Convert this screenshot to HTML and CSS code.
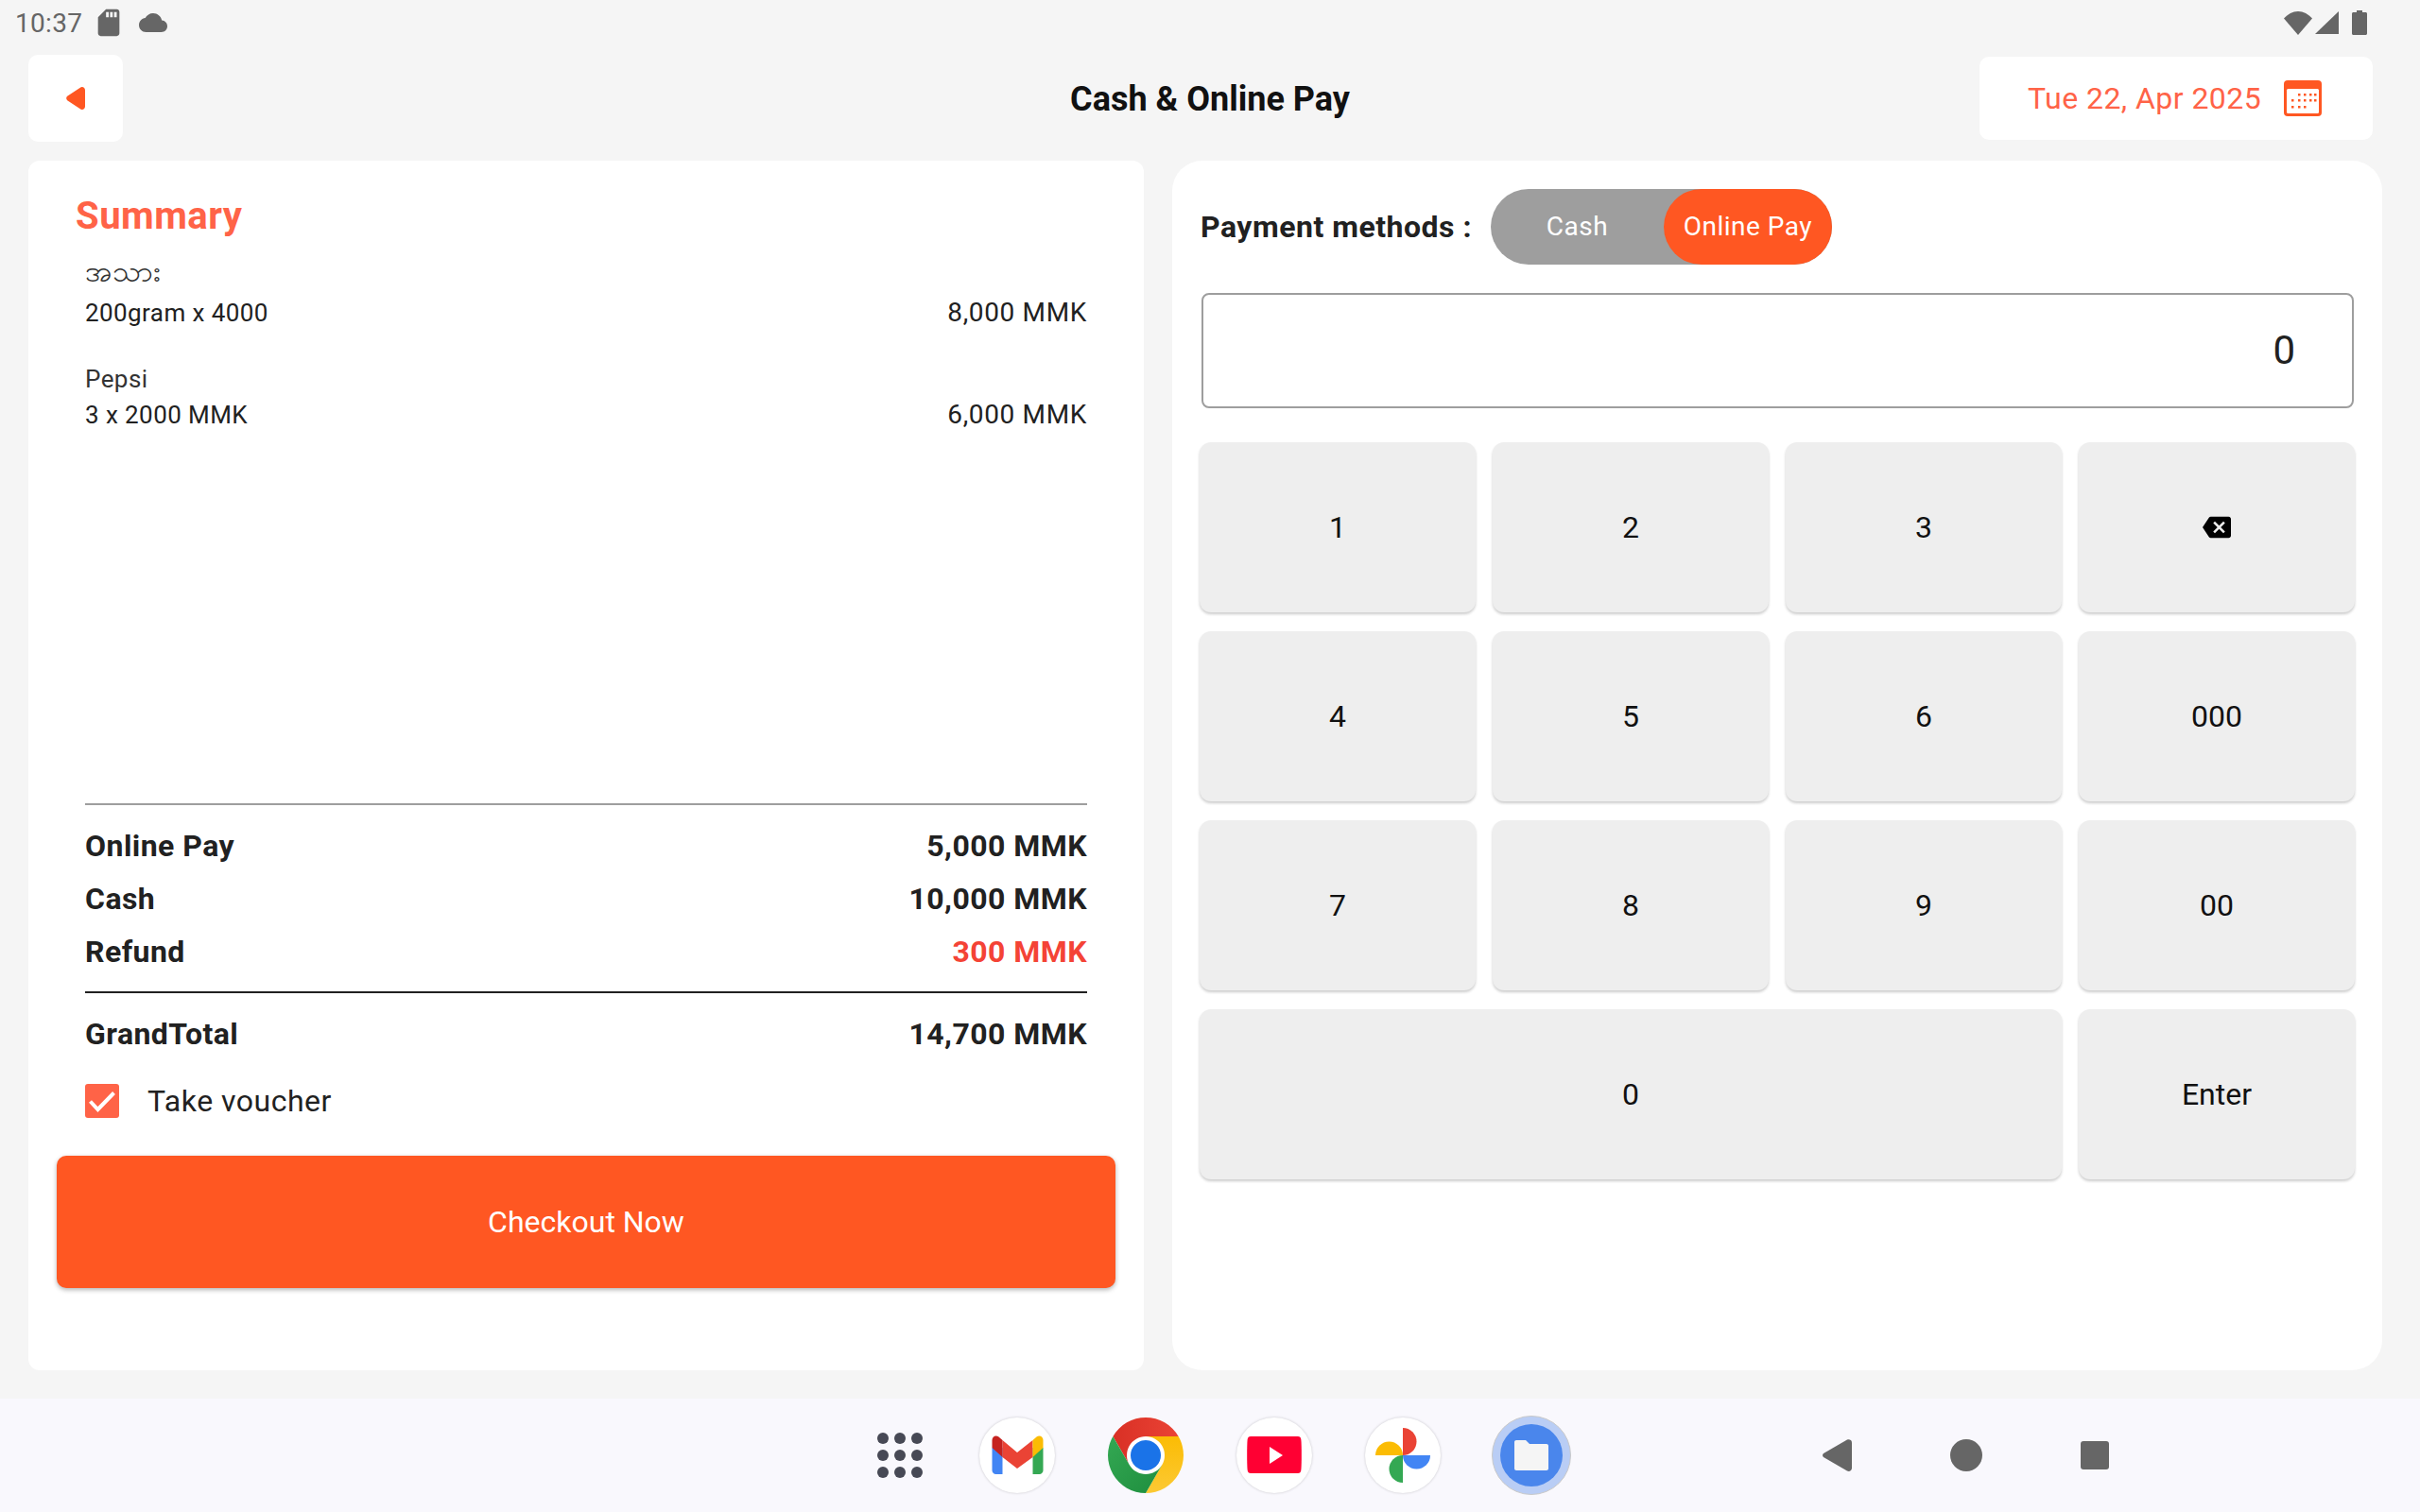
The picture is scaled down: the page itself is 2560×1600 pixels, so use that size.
FILE: index.html
```html
<!DOCTYPE html>
<html lang="en">
<head>
<meta charset="UTF-8" />
<meta name="viewport" content="width=device-width, initial-scale=1" />
<title>Cash &amp; Online Pay</title>
<link rel="stylesheet" href="styles.css">
</head>
<body>
  <div class="status-bar">
    <span class="clock">10:37</span>
    <svg class="sd-icon" viewBox="0 0 24 24"><path d="M18 2h-8L4.02 8 4 20c0 1.1.9 2 2 2h12c1.1 0 2-.9 2-2V4c0-1.1-.9-2-2-2zm-6 6h-2V4h2v4zm3 0h-2V4h2v4zm3 0h-2V4h2v4z"/></svg>
    <svg class="cloud-icon" viewBox="0 0 24 24"><path d="M19.35 10.04C18.67 6.59 15.64 4 12 4 9.11 4 6.6 5.64 5.35 8.04 2.34 8.36 0 10.91 0 14c0 3.31 2.69 6 6 6h13c2.76 0 5-2.24 5-5 0-2.64-2.05-4.78-4.65-4.96z"/></svg>
    <div class="status-right">
      <svg class="wifi-icon" viewBox="0 0 30 25"><path d="M0 7.500C4 3 9.500 0 15 0s11 3 15 7.500L15 25z"/></svg>
      <svg class="signal-icon" viewBox="0 0 25 24"><path d="M25 0v24H0z"/></svg>
      <svg class="battery-icon" viewBox="0 0 16 26"><path d="M5 0h6v2h3.500c.8 0 1.500.7 1.500 1.500v21c0 .8-.7 1.500-1.500 1.500h-13C.7 26 0 25.300 0 24.500v-21C0 2.700.7 2 1.500 2H5z"/></svg>
    </div>
  </div>

  <header class="top-bar">
    <div class="back-btn">
      <svg viewBox="0 0 20 24"><path d="M1.200 14.200a3.200 3.200 0 0 1 0-4.400L14.500 1C16.800-1 20 .4 20 3.500v17c0 3.100-3.200 4.500-5.500 2.500z"/></svg>
    </div>
    <h1 class="page-title">Cash &amp; Online Pay</h1>
    <div class="date-box">
      <span>Tue 22, Apr 2025</span>
      <svg class="calendar-icon" viewBox="0 0 40 38">
        <rect width="40" height="38" rx="4" fill="#ff5722"/>
        <rect x="3" y="9" width="34" height="26" rx="1.500" fill="#fff"/>
        <g fill="#ff5722">
          <rect x="15" y="14" width="2.500" height="2.500"/><rect x="21" y="14" width="2.500" height="2.500"/><rect x="27" y="14" width="2.500" height="2.500"/><rect x="32" y="14" width="2.500" height="2.500"/>
          <rect x="8" y="20" width="2.500" height="2.500"/><rect x="15" y="20" width="2.500" height="2.500"/><rect x="21" y="20" width="2.500" height="2.500"/><rect x="27" y="20" width="2.500" height="2.500"/><rect x="32" y="20" width="2.500" height="2.500"/>
          <rect x="8" y="27" width="2.500" height="2.500"/><rect x="15" y="27" width="2.500" height="2.500"/><rect x="21" y="27" width="2.500" height="2.500"/>
        </g>
      </svg>
    </div>
  </header>

  <main class="content">
    <section class="summary-card">
      <h2 class="summary-title">Summary</h2>
      <div class="items">
        <div class="item">
          <div class="item-name name-mm">အသား</div>
          <div class="item-row"><span>200gram x 4000</span><span class="item-price">8,000 MMK</span></div>
        </div>
        <div class="item">
          <div class="item-name">Pepsi</div>
          <div class="item-row"><span>3 x 2000 MMK</span><span class="item-price">6,000 MMK</span></div>
        </div>
      </div>
      <div class="totals">
        <div class="total-row"><span>Online Pay</span><span>5,000 MMK</span></div>
        <div class="total-row"><span>Cash</span><span>10,000 MMK</span></div>
        <div class="total-row"><span>Refund</span><span class="refund">300 MMK</span></div>
      </div>
      <div class="grand-total"><span>GrandTotal</span><span>14,700 MMK</span></div>
      <label class="voucher">
        <span class="checkbox">
          <svg viewBox="0 0 36 36"><path d="M5.500 18.500l8 8.500L30.500 9.500" fill="none" stroke="#fff" stroke-width="4"/></svg>
        </span>
        Take voucher
      </label>
      <button class="checkout-btn">Checkout Now</button>
    </section>

    <section class="payment-card">
      <div class="method-row">
        <span class="method-label">Payment methods :</span>
        <div class="toggle">
          <span class="toggle-cash">Cash</span>
          <span class="toggle-online">Online Pay</span>
        </div>
      </div>
      <div class="amount-box">0</div>
      <div class="keypad">
        <div class="key">1</div>
        <div class="key">2</div>
        <div class="key">3</div>
        <div class="key">
          <svg class="backspace-icon" viewBox="0 0 24 24"><path d="M22 3H7c-.69 0-1.230.35-1.590.88L0 12l5.410 8.110c.36.53.9.89 1.590.89h15c1.100 0 2-.9 2-2V5c0-1.100-.9-2-2-2zm-3 12.590L17.590 17 14 13.410 10.410 17 9 15.590 12.590 12 9 8.410 10.410 7 14 10.590 17.590 7 19 8.410 15.410 12 19 15.590z"/></svg>
        </div>
        <div class="key">4</div>
        <div class="key">5</div>
        <div class="key">6</div>
        <div class="key">000</div>
        <div class="key">7</div>
        <div class="key">8</div>
        <div class="key">9</div>
        <div class="key">00</div>
        <div class="key key-zero">0</div>
        <div class="key">Enter</div>
      </div>
    </section>
  </main>

  <footer class="dock">
    <div class="dock-apps">
      <div class="all-apps">
        <i></i><i></i><i></i><i></i><i></i><i></i><i></i><i></i><i></i>
      </div>
      <div class="app">
        <svg viewBox="0 0 80 80">
          <path d="M13.500 32v24c0 2.200 1.800 4 4 4h7V32z" fill="#4285f4"/>
          <path d="M56.500 32v28h7c2.200 0 4-1.800 4-4V32z" fill="#34a853"/>
          <path d="M24.500 24v18L40 54l16.500-12V24L40 37z" fill="#ea4335"/>
          <path d="M13.500 24v8l11 10V24l-4-3.500c-3-2.500-7-.5-7 3.500z" fill="#c5221f"/>
          <path d="M67.500 24v8l-11 10V24l4-3.500c3-2.500 7-.5 7 3.500z" fill="#fbbc04"/>
        </svg>
      </div>
      <div class="app app-flat">
        <svg viewBox="0 0 80 80">
          <defs>
            <linearGradient id="chromeRed" x1="0" y1="0" x2="1" y2="0"><stop offset="0" stop-color="#d93025"/><stop offset="1" stop-color="#ea4335"/></linearGradient>
            <linearGradient id="chromeGreen" x1="1" y1="1" x2="0" y2="0"><stop offset="0" stop-color="#1e8e3e"/><stop offset="1" stop-color="#34a853"/></linearGradient>
            <linearGradient id="chromeYellow" x1="0" y1="0" x2="0" y2="1"><stop offset="0" stop-color="#fbbc04"/><stop offset="1" stop-color="#fcc934"/></linearGradient>
          </defs>
          <circle cx="40" cy="40" r="40" fill="#fff"/>
          <path d="M74.640 20H40a20 20 0 0 0-17.320 30L5.360 20a40 40 0 0 1 69.280 0z" fill="url(#chromeRed)"/>
          <path d="M74.640 20a40 40 0 0 1-34.640 60L57.320 50A20 20 0 0 0 40 20z" fill="url(#chromeYellow)"/>
          <path d="M40 80A40 40 0 0 1 5.360 20L22.680 50A20 20 0 0 0 57.320 50z" fill="url(#chromeGreen)"/>
          <circle cx="40" cy="40" r="16" fill="#1a73e8"/>
        </svg>
      </div>
      <div class="app">
        <svg viewBox="0 0 80 80">
          <path d="M15 20h50c2 0 3 1 3.300 3 .7 5 .7 28 0 33-.3 2-1.300 3-3.300 3H15c-2 0-3-1-3.300-3-.7-5-.7-28 0-33 .3-2 1.300-3 3.300-3z" fill="#ff0033"/>
          <path d="M35 31l14 9-14 9z" fill="#fff"/>
        </svg>
      </div>
      <div class="app">
        <svg viewBox="0 0 80 80">
          <path d="M40 40V11a14.500 14.500 0 0 1 0 29z" fill="#ea4335"/>
          <path d="M40 40H11a14.500 14.500 0 0 1 29 0z" fill="#fbbc04"/>
          <path d="M40 40h29a14.500 14.500 0 0 1-29 0z" fill="#4285f4"/>
          <path d="M40 40v29a14.500 14.500 0 0 1 0-29z" fill="#34a853"/>
        </svg>
      </div>
      <div class="app app-files">
        <svg viewBox="0 0 84 84">
          <circle cx="42" cy="42" r="41.500" fill="#b9cdf5" stroke="#c9c9c9"/>
          <circle cx="42" cy="42" r="33" fill="#4a86ec"/>
          <path d="M24 28c0-1.100.9-2 2-2h10l4 4h18c1.100 0 2 .9 2 2v24c0 1.100-.9 2-2 2H26c-1.100 0-2-.9-2-2z" fill="#f5f5f5"/>
        </svg>
      </div>
    </div>
    <div class="nav-buttons">
      <svg class="nav-back" viewBox="0 0 31 34"><path d="M1 19L26 33.500c2 1 5 0 5-3V3.500c0-3-3-4-5-3L1 15c-1.300 1-1.300 3 0 4z"/></svg>
      <svg class="nav-home" viewBox="0 0 34 34"><circle cx="17" cy="17" r="17"/></svg>
      <svg class="nav-recent" viewBox="0 0 30 30"><rect width="30" height="30" rx="3"/></svg>
    </div>
  </footer>
</body>
</html>
```

FILE: styles.css
```css
* {
  box-sizing: border-box;
}
html, body {
  height: 100%;
}
body {
  margin: 0;
  width: 2560px;
  height: 1600px;
  display: flex;
  flex-direction: column;
  overflow: hidden;
  background-color: #f5f5f5;
  color: #212121;
  font-family: Roboto, "Noto Sans", "Noto Sans CJK SC", sans-serif;
}

/* status bar */
.status-bar {
  display: flex;
  align-items: center;
  height: 48px;
  padding: 0 0 0 16px;
  color: #666;
  fill: #666;
}
.clock {
  font-size: 28px;
  letter-spacing: .3px;
}
.sd-icon {
  width: 34px;
  height: 34px;
  margin-left: 11px;
}
.cloud-icon {
  width: 30px;
  height: 30px;
  margin-left: 15px;
}
.status-right {
  display: flex;
  align-items: center;
  gap: 3px;
  margin-left: auto;
  margin-right: 56px;
}
.wifi-icon {
  width: 30px;
  height: 25px;
}
.signal-icon {
  width: 25px;
  height: 24px;
}
.battery-icon {
  width: 16px;
  height: 26px;
  margin-left: 11px;
}

/* header */
.top-bar {
  position: relative;
  display: flex;
  align-items: center;
  justify-content: space-between;
  height: 92px;
  margin-top: 10px;
  padding: 0 50px 0 30px;
}
.back-btn {
  display: flex;
  align-items: center;
  justify-content: center;
  width: 100px;
  height: 92px;
  background-color: #fff;
  border-radius: 10px;
  fill: #ff5722;
}
.back-btn svg {
  width: 20px;
  height: 24px;
}
.page-title {
  position: absolute;
  left: 0;
  right: 0;
  margin: 0;
  padding-top: 2px;
  text-align: center;
  font-size: 36px;
  font-weight: 700;
  color: #111;
}
.date-box {
  display: flex;
  align-items: center;
  gap: 24px;
  width: 416px;
  height: 88px;
  padding-left: 51px;
  background-color: #fff;
  border-radius: 10px;
  color: #ff6347;
  font-size: 32px;
  letter-spacing: .45px;
}
.calendar-icon {
  width: 40px;
  height: 38px;
}

/* main cards */
.content {
  display: flex;
  gap: 30px;
  height: 1280px;
  margin-top: 20px;
  padding: 0 40px 0 30px;
}
.summary-card {
  display: flex;
  flex-direction: column;
  width: 1180px;
  padding: 0 30px;
  background-color: #fff;
  border-radius: 12px;
}
.summary-title {
  margin: 35px 0 0 20px;
  height: 48px;
  line-height: 48px;
  font-size: 40px;
  font-weight: 700;
  letter-spacing: .5px;
  color: #ff6347;
}
.items {
  flex: 1;
  padding: 0 30px;
  font-size: 26px;
  letter-spacing: .42px;
}
.item {
  margin-top: 20px;
}
.item + .item {
  margin-top: 34px;
}
.item-name {
  height: 36px;
  line-height: 36px;
  color: #333;
}
.name-mm {
  margin-bottom: 2px;
  line-height: 30px;
  font-size: 31px;
}
.item-row {
  display: flex;
  justify-content: space-between;
  height: 38px;
  line-height: 40px;
}
.item-price {
  font-size: 28px;
  letter-spacing: .65px;
}
.totals {
  margin: 0 30px;
  padding: 15px 0 14px;
  border-top: 2px solid #9e9e9e;
  border-bottom: 2px solid #212121;
}
.total-row,
.grand-total {
  display: flex;
  justify-content: space-between;
  height: 56px;
  line-height: 56px;
  font-size: 32px;
  font-weight: 700;
  letter-spacing: .45px;
}
.refund {
  color: #f44336;
}
.grand-total {
  margin: 15px 30px 0;
}
.voucher {
  display: flex;
  align-items: center;
  gap: 30px;
  height: 36px;
  margin: 25px 30px 0;
  font-size: 32px;
  letter-spacing: .5px;
}
.checkbox {
  width: 36px;
  height: 36px;
  background-color: #ff6347;
  border-radius: 3px;
}
.checkbox svg {
  display: block;
  width: 36px;
  height: 36px;
}
.checkout-btn {
  height: 140px;
  margin: 40px 0 87px;
  border: 0;
  border-radius: 10px;
  background-color: #ff5722;
  box-shadow: 0 2px 5px rgba(0, 0, 0, .3);
  color: #fff;
  font-family: inherit;
  font-size: 32px;
}

.payment-card {
  width: 1280px;
  padding: 30px 29px 0;
  background-color: #fff;
  border-radius: 32px;
}
.method-row {
  display: flex;
  align-items: center;
  gap: 20px;
  padding-left: 1px;
}
.method-label {
  font-size: 32px;
  font-weight: 700;
  letter-spacing: .5px;
}
.toggle {
  display: flex;
  width: 361px;
  height: 80px;
  background-color: #9e9e9e;
  border-radius: 40px;
  color: #fff;
  font-size: 28px;
  letter-spacing: .5px;
  line-height: 80px;
}
.toggle-cash {
  width: 183px;
  text-align: center;
}
.toggle-online {
  width: 178px;
  text-align: center;
  background-color: #ff5722;
  border-radius: 40px;
}
.amount-box {
  height: 122px;
  margin: 30px 0 0 2px;
  padding-right: 60px;
  width: 1219px;
  border: 2px solid #9e9e9e;
  border-radius: 8px;
  text-align: right;
  line-height: 118px;
  font-size: 42px;
}
.keypad {
  display: grid;
  grid-template-columns: repeat(4, 292px);
  grid-auto-rows: 180px;
  gap: 20px 18px;
  margin-top: 36px;
}
.key {
  display: flex;
  align-items: center;
  justify-content: center;
  background-color: #eee;
  border-radius: 12px;
  box-shadow: 0 2px 3px rgba(0, 0, 0, .2);
  color: #111;
  font-size: 32px;
}
.key-zero {
  grid-column: span 3;
}
.backspace-icon {
  width: 30px;
  height: 30px;
}

/* taskbar */
.dock {
  display: flex;
  align-items: center;
  height: 120px;
  margin-top: 30px;
  background-color: #f9f8fd;
}
.dock-apps {
  display: flex;
  align-items: center;
  margin-left: 928px;
}
.all-apps {
  display: grid;
  grid-template-columns: repeat(3, 12px);
  gap: 6px;
  margin-right: 60px;
}
.all-apps i {
  height: 12px;
  background-color: #474955;
  border-radius: 50%;
}
.app {
  width: 80px;
  height: 80px;
  margin-right: 56px;
  background-color: #fff;
  border-radius: 50%;
  box-shadow: 0 0 3px rgba(0, 0, 0, .2);
}
.app svg {
  display: block;
  width: 100%;
  height: 100%;
}
.app-flat {
  background-color: transparent;
  box-shadow: none;
}
.app-files {
  width: 84px;
  height: 84px;
  margin-left: -2px;
  margin-right: 0;
  background-color: transparent;
  box-shadow: none;
}
.nav-buttons {
  display: flex;
  align-items: center;
  margin-left: 266px;
  fill: #666;
}
.nav-back {
  width: 31px;
  height: 34px;
}
.nav-home {
  width: 34px;
  height: 34px;
  margin-left: 104px;
}
.nav-recent {
  width: 30px;
  height: 30px;
  margin-left: 104px;
}
```
